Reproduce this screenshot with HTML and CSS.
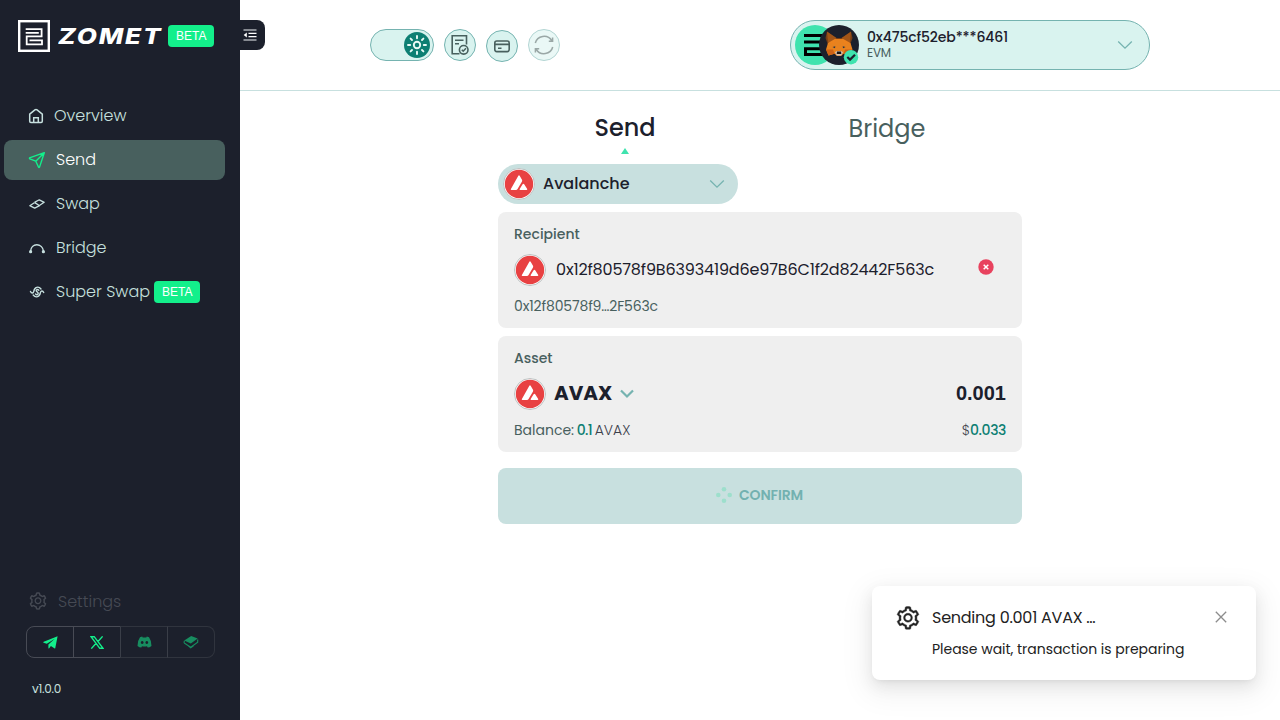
FILE: index.html
```html
<!DOCTYPE html>
<html lang="en">
<head>
<meta charset="utf-8">
<title>Zomet – Send</title>
<link rel="stylesheet" href="styles.css">
</head>
<body>
<svg class="defs" aria-hidden="true">
  <symbol id="gear" viewBox="0 0 1024 1024"><path fill="currentColor" d="M924.8 625.7l-65.5-56c3.1-19 4.7-38.4 4.7-57.8s-1.6-38.8-4.7-57.8l65.5-56a32.03 32.03 0 0 0 9.3-35.2l-.9-2.6a443.74 443.74 0 0 0-79.7-137.9l-1.8-2.1a32.12 32.12 0 0 0-35.1-9.5l-81.3 28.9c-30-24.6-63.5-44-99.7-57.6l-15.7-85a32.05 32.05 0 0 0-25.8-25.7l-2.7-.5c-52.1-9.4-106.9-9.4-159 0l-2.7.5a32.05 32.05 0 0 0-25.8 25.7l-15.8 85.4a351.86 351.86 0 0 0-99 57.4l-81.9-29.1a32 32 0 0 0-35.1 9.5l-1.8 2.1a446.02 446.02 0 0 0-79.7 137.9l-.9 2.6c-4.5 12.5-.8 26.5 9.3 35.2l66.3 56.6c-3.1 18.8-4.6 38-4.6 57.1 0 19.2 1.5 38.4 4.6 57.1L99 625.500a32.03 32.03 0 0 0-9.3 35.2l.9 2.6c18.1 50.400 44.900 96.900 79.700 137.900l1.800 2.100a32.120 32.120 0 0 0 35.100 9.500l81.900-29.100c29.800 24.500 63.100 43.900 99 57.400l15.800 85.400a32.050 32.050 0 0 0 25.800 25.700l2.700.500a449.400 449.400 0 0 0 159 0l2.700-.500a32.050 32.050 0 0 0 25.800-25.700l15.700-85a350 350 0 0 0 99.700-57.600l81.300 28.900a32 32 0 0 0 35.100-9.500l1.800-2.100c34.800-41.100 61.600-87.500 79.700-137.900l.9-2.600c4.500-12.300.8-26.300-9.300-35zM788.300 465.900c2.500 15.100 3.800 30.600 3.800 46.100s-1.300 31-3.800 46.100l-6.600 40.100 74.700 63.900a370.030 370.030 0 0 1-42.600 73.600L721 702.800l-31.400 25.800c-23.900 19.600-50.500 35-79.300 45.800l-38.100 14.300-17.900 97a377.500 377.500 0 0 1-85 0l-17.900-97.200-37.800-14.500c-28.500-10.800-55-26.200-78.700-45.700l-31.400-25.900-93.400 33.200c-17-22.900-31.200-47.600-42.600-73.600l75.500-64.500-6.500-40c-2.400-14.900-3.700-30.300-3.700-45.500 0-15.300 1.200-30.600 3.700-45.500l6.500-40-75.500-64.500c11.300-26.100 25.600-50.700 42.600-73.600l93.400 33.200 31.400-25.900c23.700-19.500 50.200-34.900 78.700-45.700l37.900-14.300 17.900-97.200c28.100-3.200 56.800-3.200 85 0l17.900 97 38.100 14.300c28.700 10.800 55.400 26.200 79.300 45.800l31.400 25.800 92.800-32.900c17 22.900 31.200 47.600 42.600 73.600L781.800 426l6.500 39.900zM512 326c-97.200 0-176 78.800-176 176s78.800 176 176 176 176-78.800 176-176-78.800-176-176-176zm79.200 255.200A111.600 111.600 0 0 1 512 614c-29.900 0-58-11.700-79.200-32.800A111.600 111.600 0 0 1 400 502c0-29.900 11.700-58 32.800-79.200C454 401.600 482.100 390 512 390c29.900 0 58 11.600 79.200 32.800A111.600 111.600 0 0 1 624 502c0 29.900-11.700 58-32.800 79.200z"/></symbol>
  <symbol id="avax" viewBox="0 0 32 32"><circle cx="16" cy="16" r="15.500" fill="#fff" stroke="#bcc0c0"/><circle cx="16" cy="16" r="14.200" fill="#e84142"/><path fill="#fff" d="M15.200 7.900Q16 6.800 16.800 7.900L19 11.700Q19.400 12.600 19 13.400L14.400 21.300Q13.900 22.100 13 22.100H8.600Q7.300 22 7.900 20.900ZM19.600 16.300Q20.400 15.200 21.200 16.300L24.200 21Q24.600 22 23.500 22.100H17.300Q16.100 22 16.700 21Z"/></symbol>
</svg>
<div class="app">
  <aside class="sidebar">
    <div class="brand">
      <svg class="mark" viewBox="0 0 32 32" fill="none" stroke="#fff"><rect x="1.200" y="1.200" width="29.600" height="29.600" stroke-width="2.400"/><path stroke-width="1.800" d="M7.700 9.100H23.600V16.400H8.700V24.400H24V20.400H11.500M7.700 12.800H20.800"/></svg>
      <span class="wordmark"><span>ZOMET</span></span>
      <span class="tag">BETA</span>
    </div>
    <button class="collapse" aria-label="Collapse">
      <svg width="14" height="14" viewBox="0 0 14 14" fill="none" stroke-width="1.300"><path stroke="#a9adb3" d="M.5 2H13.500M.5 12H13.500"/><path stroke="#fff" d="M5.500 5.400H13.500M5.500 8.700H13.500"/><path fill="#fff" d="M.7 7L3.800 4.600V9.400Z"/></svg>
    </button>
    <nav class="menu">
      <a class="item home"><svg viewBox="0 0 16 16" fill="none" stroke="currentColor" stroke-width="1.500"><path d="M1.700 6.200L6.900 1.900Q8 1.100 9.100 1.900L14.300 6.200V13.300Q14.300 14.500 13.100 14.500H2.900Q1.700 14.500 1.700 13.300ZM5.700 14V9.700H10.300V14"/></svg><span>Overview</span></a>
      <a class="item active"><svg viewBox="0 0 18 18" fill="none" stroke="currentColor" stroke-width="1.400" stroke-linejoin="round"><path d="M16.300 1.700L1.500 6.900Q1.300 7.500 1.800 7.800L7.800 10.200L10.600 16.200Q11.200 16.800 11.600 15.900ZM16 2L7.800 10.200"/></svg><span>Send</span></a>
      <a class="item"><svg viewBox="0 0 18 18" fill="none" stroke="currentColor" stroke-width="1.300" stroke-linejoin="round"><path d="M6.300 7.800L1.800 10.700L6.700 13.200L11.500 10.700L6.500 7.400M11.700 10.200L16.200 7.300L11.300 4.800L6.500 7.400"/></svg><span>Swap</span></a>
      <a class="item"><svg viewBox="0 0 18 18" fill="none" stroke="currentColor" stroke-width="1.500"><path d="M2.500 12.500C3 3.500 14.500 3.500 15.600 12.500"/><circle cx="2.600" cy="12.700" r="1.600" fill="currentColor" stroke="none"/><circle cx="15.400" cy="12.700" r="1.600" fill="currentColor" stroke="none"/></svg><span>Bridge</span></a>
      <a class="item"><svg viewBox="0 0 18 18" fill="none" stroke="currentColor" stroke-width="1.400" stroke-linecap="round"><path d="M2.500 8.500C3.500 10.800 5.400 10.400 5.800 8.300C6.500 4 10.500 2.800 13 6M15.700 9.500C14.700 7.200 12.800 7.600 12.400 9.700C11.700 14 7.700 15.200 5.200 12M10.800 7.200C9.200 5.500 7.300 7.200 8.700 8.500L9.800 9.500C11 10.900 9.100 12.600 7.500 11"/></svg><span>Super Swap</span><span class="tag">BETA</span></a>
    </nav>
    <div class="bottom">
      <a class="settings"><svg width="20" height="20"><use href="#gear"/></svg><span>Settings</span></a>
      <div class="socials">
        <a><svg width="15" height="13" viewBox="0 0 15 13" fill="currentColor"><path d="M14.600.2L12.300 11.900Q12.100 12.700 11.300 12.300L7.900 10L6 12.400Q5.500 12.900 5.400 12.100V8.600L11.800 2.800L3.800 7.800L.6 6.700Q-.2 6.200.7 5.700Z"/></svg></a>
        <a><svg width="14" height="13" viewBox="0 0 14 13" fill="none" stroke="currentColor" stroke-width="1.400"><path d="M1 .7H4.200L13 12.300H9.800ZM12.600.4L7.800 5.700M6.100 7.300L1.300 12.600"/></svg></a>
        <a class="dim"><svg width="15" height="12" viewBox="0 0 15 12" fill="currentColor" fill-rule="evenodd"><path d="M5.200.5L3 1.200Q.2 5 .5 10Q2.500 11.500 4.300 11.600L5 10.300Q7.500 10.800 10 10.300L10.700 11.600Q12.500 11.500 14.500 10Q14.800 5 12 1.200L9.800.5L9.300 1.400H5.700ZM5.200 5A1.400 1.500 0 1 0 5.210 5ZM9.800 5A1.400 1.500 0 1 0 9.810 5Z"/></svg></a>
        <a class="dim"><svg width="16" height="14" viewBox="0 0 16 14" fill="currentColor"><path d="M8.200.9L14.700 3.600L7.800 8.500L1.200 5.600Z"/><path fill="none" stroke="currentColor" stroke-width="1.100" d="M1.500 5.800Q.5 8 2 8.600L7.700 12.300L14.700 7.300V4.500M5.500 11L7.700 12.800L10.500 10.800"/></svg></a>
      </div>
      <div class="version">v1.0.0</div>
    </div>
  </aside>

  <main class="main">
    <header class="topbar">
      <div class="controls">
        <div class="toggle"><svg width="26" height="26" viewBox="0 0 26 26" fill="none" stroke="#e8faf6" stroke-width="1.900" stroke-linecap="round"><circle cx="13" cy="13" r="13" fill="#0d7f73" stroke="none"/><circle cx="13" cy="13" r="3.200"/><path d="M13 4V6.200M13 19.800V22M4 13H6.200M19.800 13H22M6.600 6.600L8 8M18 18L19.400 19.400M6.600 19.400L8 18M18 8L19.400 6.600"/></svg></div>
        <button class="round"><svg width="20" height="22" viewBox="0 0 20 22" fill="none" stroke="currentColor" stroke-width="1.600"><path d="M9.500 19.700H2.200V1.700H16.500V10.500M5 6.200H13.500M5 9.700H9"/><circle cx="13.700" cy="15.800" r="4.300"/><path d="M11.800 15.800L13.200 17.200L16 14.200"/></svg></button>
        <button class="round low"><svg width="18" height="16" viewBox="0 0 18 16" fill="none" stroke="currentColor" stroke-width="1.600"><rect x="1.800" y="3" width="14.400" height="10.600" rx="2"/><path d="M2 6.400H16M5 10.200H8.500"/></svg></button>
        <button class="round faded"><svg width="22" height="22" viewBox="0 0 22 22" fill="none" stroke="currentColor" stroke-width="1.500"><path d="M2.300 9A9 8.800 0 0 1 18.700 6.500M19.700 13A9 8.800 0 0 1 3.300 15.500M19.600 3.400V7.300H15.800M2.400 18.600V14.700H6.200"/></svg></button>
      </div>
      <div class="account">
        <svg class="avatars" width="66" height="42" viewBox="0 0 66 42">
          <circle cx="20" cy="21" r="20" fill="#3fe3ae"/>
          <path fill="none" stroke="#000" stroke-width="3" d="M9 11.500H34M9 18H34M34 24.700H10.500V30.500H34"/>
          <circle cx="44" cy="21" r="20" fill="#1c202c"/>
          <path fill="#763d16" d="M32 7.500L41.500 14H46.500L56 7.500L57.500 14L55 21H33L30.500 14Z"/>
          <path fill="#e8821e" d="M39.800 15H48.200L55.500 19L57.500 25.500L54.500 31.500L48.500 29.800L46 32H42L39.500 29.800L33.500 31.500L31 25.500L33 19Z"/>
          <path fill="#f6851b" d="M32 7.500L41.500 14L38.500 20L33 18.600ZM56 7.500L46.500 14L49.500 20L55 18.600Z" opacity=".35"/>
          <path fill="#cd6116" d="M31 25.500H38L39.500 29.800L33.500 31.500ZM57 25.500H50L48.500 29.800L54.500 31.500Z"/>
          <path fill="#233447" d="M37.500 23L40.300 22.200L40 24.200ZM50.500 23L47.700 22.200L48 24.200Z"/>
          <path fill="#d7c1b3" d="M40 28.300L42 27H46L48 28.300L46.300 31.500H41.700Z"/><path fill="#161616" d="M42 27.500H46L46.300 30H41.700Z"/>
          <circle cx="56" cy="33.200" r="7.200" fill="#3fe3ae"/><path fill="none" stroke="#1c202c" stroke-width="2.200" d="M52.300 33L55 35.600L60 30.800"/>
        </svg>
        <div class="who"><span class="address">0x475cf52eb***6461</span><span class="chain">EVM</span></div>
        <svg class="chev" width="16" height="10" viewBox="0 0 16 10"><path d="M1.200 1.500L8 8.200L14.800 1.500"/></svg>
      </div>
    </header>

    <section class="panel">
      <div class="tabs"><a class="tab current">Send</a><a class="tab">Bridge</a></div>
      <div class="network"><svg width="32" height="32"><use href="#avax"/></svg><span>Avalanche</span><svg class="chev" width="16" height="10" viewBox="0 0 16 10"><path d="M1.200 1.500L8 8.200L14.800 1.500"/></svg></div>
      <div class="card">
        <div class="label">Recipient</div>
        <div class="row recipient"><svg width="32" height="32"><use href="#avax"/></svg><span class="full">0x12f80578f9B6393419d6e97B6C1f2d82442F563c</span>
          <svg class="clear" width="16" height="16" viewBox="0 0 16 16"><circle cx="8" cy="8" r="7.700" fill="#e8425e"/><path d="M5.700 5.700L10.300 10.300M10.300 5.700L5.700 10.300" stroke="#fff" stroke-width="1.500"/></svg></div>
        <div class="foot short">0x12f80578f9…2F563c</div>
      </div>
      <div class="card">
        <div class="label">Asset</div>
        <div class="row"><svg width="32" height="32"><use href="#avax"/></svg><span class="symbol">AVAX</span><svg class="chev bold" width="14" height="10" viewBox="0 0 14 10"><path d="M1 1.500L7 7.500L13 1.500"/></svg><span class="amount">0.001</span></div>
        <div class="foot"><span>Balance: <b class="balance">0.1</b> <i>AVAX</i></span><span><i>$</i><b class="usd">0.033</b></span></div>
      </div>
      <button class="confirm"><svg width="16" height="16" viewBox="0 0 16 16" fill="#9ddfcc"><circle cx="8" cy="2.300" r="2.300"/><circle cx="13.700" cy="8" r="2.300"/><circle cx="8" cy="13.700" r="2.300"/><circle cx="2.300" cy="8" r="2.300"/></svg><span>CONFIRM</span></button>
    </section>
  </main>

  <div class="toast">
    <svg class="cog" width="26" height="26"><use href="#gear"/></svg>
    <div class="message"><div class="title">Sending 0.001 AVAX …</div><div class="text">Please wait, transaction is preparing</div></div>
    <svg class="close" width="12" height="12" viewBox="0 0 12 12"><path d="M.8.8L11.200 11.200M11.200.8L.8 11.200" stroke="#8c8c8c" stroke-width="1.300"/></svg>
  </div>
</div>
</body>
</html>
```
FILE: styles.css
```css
*{box-sizing:border-box}
body{margin:0;font-family:Poppins,Inter,sans-serif;color:#1c202c;background:#fff}
svg{display:block;flex:none}
.defs{position:absolute;width:0;height:0}
button{border:0;padding:0;font:inherit}
.app{position:relative;display:flex;width:1280px;height:720px;overflow:hidden}
.sidebar{position:relative;display:flex;flex-direction:column;width:240px;height:720px;background:#1c202c;color:#c7e0df}
.brand{display:flex;align-items:center;height:72px;padding-left:18px}
.mark{width:32px;height:32px}
.wordmark{flex:none;width:118px;padding:2px 0 0 8px;font:italic 800 21px/32px Inter,sans-serif;color:#fff}
.wordmark span{display:inline-block;letter-spacing:1.500px;transform:scaleX(1.240);transform-origin:left}
.tag{display:block;height:22px;padding:0 7.500px 0 8px;border-radius:4px;background:#13ef8b;color:#fff;font:12px/22px "Liberation Sans",sans-serif}
.collapse{position:absolute;left:240px;top:20px;width:25px;height:30px;border-radius:0 8px 8px 0;background:#1c202c;display:flex;align-items:center;padding-left:3px}
.menu{display:flex;flex-direction:column;gap:4px;padding:24px 15px 0 4px}
.item{display:flex;align-items:center;height:40px;padding-left:24px;border-radius:8px;font-size:16px;font-weight:300;line-height:40px}
.item svg{width:18px;height:18px;margin-right:10px}
.item.home svg{width:16px;height:16px}
.item.active{background:#48605e;color:#fff}
.item.active svg{color:#13ef8b}
.item .tag{margin-left:4px;font-weight:400;padding:0 8px}
.bottom{margin-top:auto;height:133px;padding-left:26px}
.settings{display:flex;align-items:center;gap:10px;height:28px;padding-left:2px;color:#464a54;font-size:16px;font-weight:300}
.socials{display:flex;width:189px;height:32px;margin-top:11px;color:#13ef8b}
.socials a{display:flex;align-items:center;justify-content:center;flex:1;border:1px solid #484b55;margin-right:-1px}
.socials a:first-child{border-radius:8px 0 0 8px}
.socials a:last-child{border-radius:0 8px 8px 0;margin-right:0}
.socials .dim{border-color:#30343e;border-left-color:#3a3e48;color:#188d60}
.version{margin:21px 0 0 6px;font-size:12px;line-height:20px;letter-spacing:-.3px}
.main{flex:1}
.topbar{display:flex;justify-content:space-between;align-items:center;height:91px;padding:0 130px;border-bottom:1px solid #c7e0df}
.controls{display:flex;gap:10px}
.toggle{display:flex;align-items:center;justify-content:flex-end;width:64px;height:32px;padding-right:3px;border:1px solid #75b3b0;border-radius:16px;background:#d9f3ef}
.round{display:flex;align-items:center;justify-content:center;width:32px;height:32px;border:1px solid #75b3b0;border-radius:50%;background:#d9f3ef;color:#48605e}
.round.low{margin-top:1px}
.round.faded{opacity:.55}
.account{display:flex;align-items:center;width:360px;height:50px;padding:0 16px 0 4px;border:1px solid #75b3b0;border-radius:25px;background:#d9f3ef}
.who{display:flex;flex-direction:column;margin:-2px 0 0 6px;flex:1}
.address{font-size:14px;font-weight:500;line-height:16px;letter-spacing:-.12px}
.chain{font-size:12px;line-height:15px;letter-spacing:-.2px;color:#48605e}
.chev path{fill:none;stroke:#75b3b0;stroke-width:1.300}
.chev.bold path{stroke-width:2.200}
.panel{width:524px;margin:0 auto}
.tabs{display:grid;grid-template-columns:1fr 1fr;height:73px;margin-left:-4px;margin-right:4px;padding-top:18px;text-align:center;font-size:24px;line-height:40px;color:#48605e}
.current{position:relative;line-height:38px;font-weight:500;color:#1c202c}
.current::after{content:"";position:absolute;left:127px;top:39px;border:4px solid transparent;border-top:0;border-bottom:6px solid #3fe3ae}
.network{display:flex;align-items:center;width:240px;height:40px;padding:0 13px 0 5px;border-radius:20px;background:#c8e0df;font-size:16px;font-weight:500}
.network span{flex:1;margin:-2px 0 0 8px}
.card{height:116px;margin-top:8px;padding:11px 16px 0;border-radius:8px;background:#efefef}
.label{font-size:14px;font-weight:500;line-height:22px;color:#48605e}
.row{display:flex;align-items:center;height:32px;margin-top:9px}
.full{margin:-2px 0 0 10px;font-size:16px;letter-spacing:-.15px}
.clear{margin:-6px 12px 0 auto}
.foot{display:flex;justify-content:space-between;margin-top:9px;font-size:14px;line-height:22px;color:#48605e}
.short{letter-spacing:-.140px}
.foot b{font-weight:500;color:#0d7f73;letter-spacing:-.4px}
.foot .balance{letter-spacing:-.7px}
.foot i{font-style:normal;font-weight:300;color:#3c404b}
.foot .balance + i{margin-left:-1px}
.balance{margin-left:-1px}
.symbol{margin:-2px 8px 0;font-size:20px;font-weight:700;width:58px}
.amount{margin:-2px 0 0 auto;font:bold 20px "Liberation Sans",sans-serif}
.confirm{display:flex;align-items:center;justify-content:center;gap:7px;width:524px;height:56px;margin-top:16px;padding:0 1px 2px 0;border-radius:8px;background:#c8e0df;color:#73b1b0;font-size:14px;font-weight:600;letter-spacing:-.1px}
.toast{position:absolute;right:24px;bottom:40px;display:flex;width:384px;height:94px;padding:19px 29px 0 23px;border-radius:8px;background:#fff;color:#222;box-shadow:0 6px 16px rgba(0,0,0,.08),0 3px 6px -4px rgba(0,0,0,.12),0 9px 28px 8px rgba(0,0,0,.05)}
.cog{stroke:currentColor;stroke-width:16px}
.message{margin-left:11px;flex:1}
.title{padding-top:1px;font-size:16px;line-height:24px;letter-spacing:-.25px}
.text{margin-top:8px;font-size:14px;line-height:22px;letter-spacing:-.03px}
.close{margin-top:6px}
```
